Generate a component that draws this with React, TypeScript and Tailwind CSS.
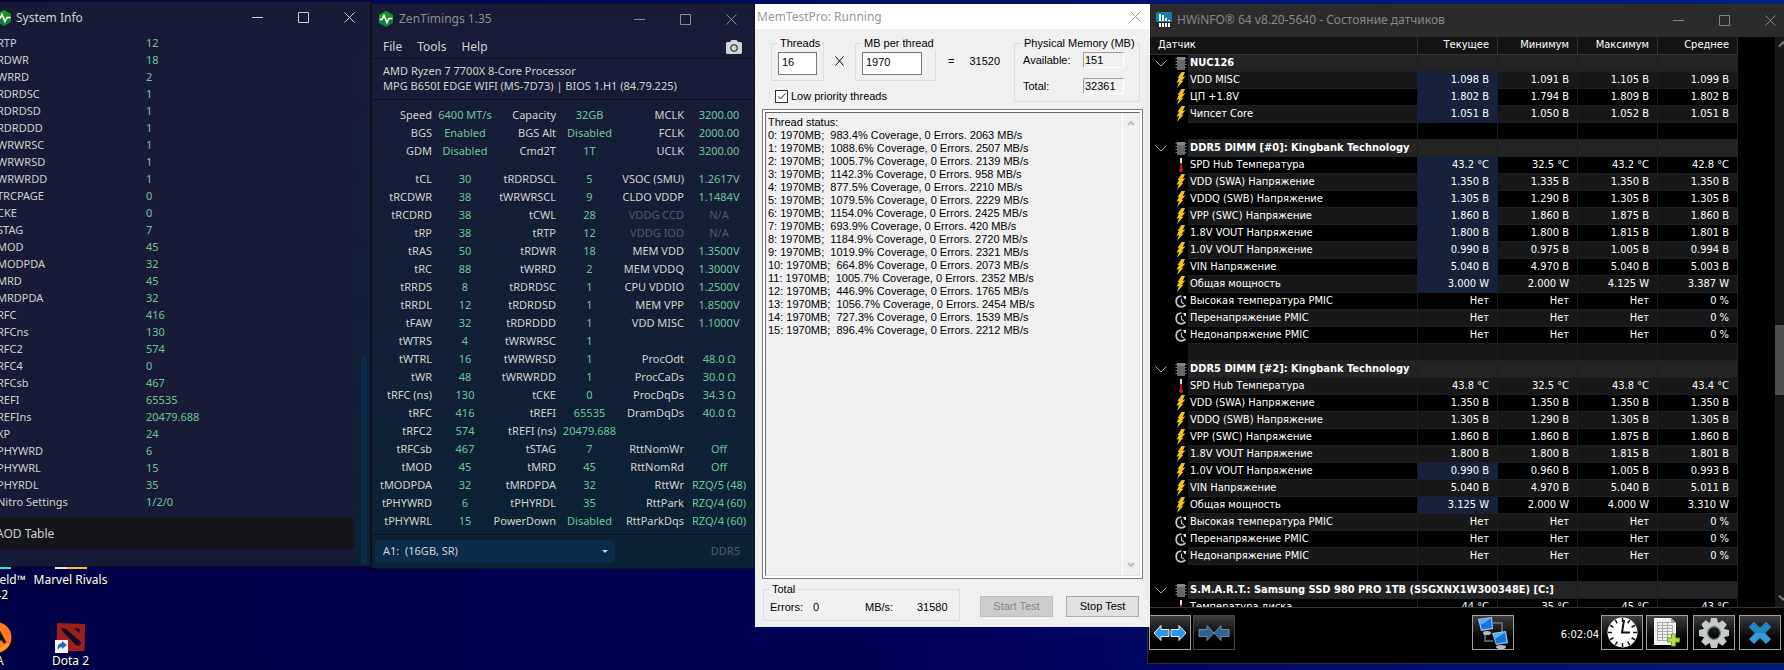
import type { ReactNode } from 'react'
import { FaCamera } from 'react-icons/fa'

type Cell = [string, string]

const sysInfo: Cell[] = [
  ['RTP', '12'],
  ['RDWR', '18'],
  ['WRRD', '2'],
  ['RDRDSC', '1'],
  ['RDRDSD', '1'],
  ['RDRDDD', '1'],
  ['WRWRSC', '1'],
  ['WRWRSD', '1'],
  ['WRWRDD', '1'],
  ['TRCPAGE', '0'],
  ['CKE', '0'],
  ['STAG', '7'],
  ['MOD', '45'],
  ['MODPDA', '32'],
  ['MRD', '45'],
  ['MRDPDA', '32'],
  ['RFC', '416'],
  ['RFCns', '130'],
  ['RFC2', '574'],
  ['RFC4', '0'],
  ['RFCsb', '467'],
  ['REFI', '65535'],
  ['REFIns', '20479.688'],
  ['XP', '24'],
  ['PHYWRD', '6'],
  ['PHYWRL', '15'],
  ['PHYRDL', '35'],
  ['Nitro Settings', '1/2/0'],
]

const general: Cell[][] = [
  [['Speed', '6400 MT/s'], ['Capacity', '32GB'], ['MCLK', '3200.00']],
  [['BGS', 'Enabled'], ['BGS Alt', 'Disabled'], ['FCLK', '2000.00']],
  [['GDM', 'Disabled'], ['Cmd2T', '1T'], ['UCLK', '3200.00']],
]

const timings: Cell[][] = [
  [['tCL', '30'], ['tRDRDSCL', '5'], ['VSOC (SMU)', '1.2617V']],
  [['tRCDWR', '38'], ['tWRWRSCL', '9'], ['CLDO VDDP', '1.1484V']],
  [['tRCDRD', '38'], ['tCWL', '28'], ['VDDG CCD', 'N/A']],
  [['tRP', '38'], ['tRTP', '12'], ['VDDG IOD', 'N/A']],
  [['tRAS', '50'], ['tRDWR', '18'], ['MEM VDD', '1.3500V']],
  [['tRC', '88'], ['tWRRD', '2'], ['MEM VDDQ', '1.3000V']],
  [['tRRDS', '8'], ['tRDRDSC', '1'], ['CPU VDDIO', '1.2500V']],
  [['tRRDL', '12'], ['tRDRDSD', '1'], ['MEM VPP', '1.8500V']],
  [['tFAW', '32'], ['tRDRDDD', '1'], ['VDD MISC', '1.1000V']],
  [['tWTRS', '4'], ['tWRWRSC', '1'], ['', '']],
  [['tWTRL', '16'], ['tWRWRSD', '1'], ['ProcOdt', '48.0 Ω']],
  [['tWR', '48'], ['tWRWRDD', '1'], ['ProcCaDs', '30.0 Ω']],
  [['tRFC (ns)', '130'], ['tCKE', '0'], ['ProcDqDs', '34.3 Ω']],
  [['tRFC', '416'], ['tREFI', '65535'], ['DramDqDs', '40.0 Ω']],
  [['tRFC2', '574'], ['tREFI (ns)', '20479.688'], ['', '']],
  [['tRFCsb', '467'], ['tSTAG', '7'], ['RttNomWr', 'Off']],
  [['tMOD', '45'], ['tMRD', '45'], ['RttNomRd', 'Off']],
  [['tMODPDA', '32'], ['tMRDPDA', '32'], ['RttWr', 'RZQ/5 (48)']],
  [['tPHYWRD', '6'], ['tPHYRDL', '35'], ['RttPark', 'RZQ/4 (60)']],
  [['tPHYWRL', '15'], ['PowerDown', 'Disabled'], ['RttParkDqs', 'RZQ/4 (60)']],
]

const threads: [string, number][] = [
  ['983.4', 2063],
  ['1088.6', 2507],
  ['1005.7', 2139],
  ['1142.3', 958],
  ['877.5', 2210],
  ['1079.5', 2229],
  ['1154.0', 2425],
  ['693.9', 420],
  ['1184.9', 2720],
  ['1019.9', 2321],
  ['664.8', 2073],
  ['1005.7', 2352],
  ['446.9', 1765],
  ['1056.7', 2454],
  ['727.3', 1539],
  ['896.4', 2212],
]

type Kind = 'group' | 'volt' | 'temp' | 'clock' | 'blank'

type Sensor = {
  kind: Kind
  name: string
  values: string[]
  hot?: boolean
}

const none = ['', '', '', '']
const no = ['Нет', 'Нет', 'Нет', '0 %']

const group = (name: string): Sensor => ({ kind: 'group', name, values: none })
const blank: Sensor = { kind: 'blank', name: '', values: none }
const volt = (name: string, values: string, hot = false): Sensor => ({
  kind: 'volt',
  name,
  values: values.split('|'),
  hot,
})
const temp = (name: string, values: string, hot = false): Sensor => ({ ...volt(name, values, hot), kind: 'temp' })
const pmic: Sensor[] = ['Высокая температура PMIC', 'Перенапряжение PMIC', 'Недонапряжение PMIC'].map((name) => ({
  kind: 'clock',
  name,
  values: no,
}))

const sensors: Sensor[] = [
  group('NUC126'),
  volt('VDD MISC', '1.098 В|1.091 В|1.105 В|1.099 В', true),
  volt('ЦП +1.8V', '1.802 В|1.794 В|1.809 В|1.802 В', true),
  volt('Чипсет Core', '1.051 В|1.050 В|1.052 В|1.051 В', true),
  blank,
  group('DDR5 DIMM [#0]: Kingbank Technology'),
  temp('SPD Hub Температура', '43.2 °C|32.5 °C|43.2 °C|42.8 °C', true),
  volt('VDD (SWA) Напряжение', '1.350 В|1.335 В|1.350 В|1.350 В', true),
  volt('VDDQ (SWB) Напряжение', '1.305 В|1.290 В|1.305 В|1.305 В', true),
  volt('VPP (SWC) Напряжение', '1.860 В|1.860 В|1.875 В|1.860 В', true),
  volt('1.8V VOUT Напряжение', '1.800 В|1.800 В|1.815 В|1.801 В', true),
  volt('1.0V VOUT Напряжение', '0.990 В|0.975 В|1.005 В|0.994 В', true),
  volt('VIN Напряжение', '5.040 В|4.970 В|5.040 В|5.003 В', true),
  volt('Общая мощность', '3.000 W|2.000 W|4.125 W|3.387 W', true),
  ...pmic,
  blank,
  group('DDR5 DIMM [#2]: Kingbank Technology'),
  temp('SPD Hub Температура', '43.8 °C|32.5 °C|43.8 °C|43.4 °C'),
  volt('VDD (SWA) Напряжение', '1.350 В|1.350 В|1.350 В|1.350 В'),
  volt('VDDQ (SWB) Напряжение', '1.305 В|1.290 В|1.305 В|1.305 В'),
  volt('VPP (SWC) Напряжение', '1.860 В|1.860 В|1.875 В|1.860 В'),
  volt('1.8V VOUT Напряжение', '1.800 В|1.800 В|1.815 В|1.801 В'),
  volt('1.0V VOUT Напряжение', '0.990 В|0.960 В|1.005 В|0.993 В', true),
  volt('VIN Напряжение', '5.040 В|4.970 В|5.040 В|5.011 В'),
  volt('Общая мощность', '3.125 W|2.000 W|4.000 W|3.310 W', true),
  ...pmic,
  blank,
  group('S.M.A.R.T.: Samsung SSD 980 PRO 1TB (S5GXNX1W300348E) [C:]'),
  temp('Температура диска', '44 °C|35 °C|45 °C|43 °C'),
]

function CaptionButtons({ className = '' }: { className?: string }) {
  const button = 'flex w-[46px] items-center justify-center self-stretch'
  return (
    <div className={`flex self-stretch ${className}`}>
      <button type="button" aria-label="Minimize" className={button}>
        <svg width="11" height="11" stroke="currentColor">
          <path d="M0 5.5h11" />
        </svg>
      </button>
      <button type="button" aria-label="Maximize" className={button}>
        <svg width="11" height="11" stroke="currentColor" fill="none">
          <path d="M.5 .5h10v10h-10z" />
        </svg>
      </button>
      <CloseButton className={button} />
    </div>
  )
}

function CloseButton({ className }: { className: string }) {
  return (
    <button type="button" aria-label="Close" className={className}>
      <svg width="11" height="11" stroke="currentColor">
        <path d="M.5 .5l10 10M10.5 .5l-10 10" />
      </svg>
    </button>
  )
}

function ZenLogo() {
  return (
    <svg width="16" height="16" viewBox="0 0 16 16" className="shrink-0">
      <path d="M8 0l7 4v8l-7 4-7-4V4z" fill="#12803a" />
      <path d="M8 0l7 4v4H1V4z" fill="#1f9124" />
      <path d="M1.500 8.500h2.500l2-4 3 7 2-4h3.500" fill="none" stroke="#fff" strokeWidth="1.600" />
    </svg>
  )
}

function SystemInfo() {
  return (
    <section className="-ml-[5px] mt-px border border-[#0e0f1c] bg-[#181b38] text-[#cfd0d0]">
      <header className="flex h-[31px] items-center">
        <ZenLogo />
        <h1 className="ml-1 flex-1 text-xs">System Info</h1>
        <CaptionButtons className="-mr-[2px]" />
      </header>
      <div className="flex pt-px">
        <div className="flex-1">
          <table className="w-full table-fixed text-[11px] leading-[17px]">
            <tbody>
              {sysInfo.map(([name, value]) => (
                <tr key={name}>
                  <th scope="row" className="w-[150px] p-0 pl-px text-left font-normal whitespace-nowrap">
                    {name}
                  </th>
                  <td className="p-0 text-[#70c49a]">{value}</td>
                </tr>
              ))}
            </tbody>
          </table>
          <button
            type="button"
            className="mt-[8px] mb-4 block h-8 w-full rounded-r-sm bg-[#141519] text-left text-xs"
          >
            AOD Table
          </button>
        </div>
        <div className="flex w-4 flex-col items-center justify-end bg-linear-to-b from-[#181b38] via-[#101f38] to-[#0a2236] pb-px">
          <div className="ml-1 h-[209px] w-[6px] rounded-full bg-[#0b2c48]" />
        </div>
      </div>
    </section>
  )
}

function TimingRow({ cells }: { cells: Cell[] }) {
  return (
    <tr className="h-[18px]">
      {cells.map(([name, value], i) => (
        <TimingPair key={i} name={name} value={value} />
      ))}
    </tr>
  )
}

function TimingPair({ name, value }: { name: string; value: string }) {
  const off = value === 'N/A'
  return (
    <>
      <th scope="row" className={`p-0 font-normal ${off ? 'text-[#505c68]' : ''}`}>
        <div className="flex justify-end whitespace-nowrap">{name}</div>
      </th>
      <td className={`p-0 ${off ? 'text-[#505c68]' : 'text-[#70c49a]'}`}>
        <div className="flex justify-center whitespace-nowrap">{value}</div>
      </td>
    </>
  )
}

function ZenTimings() {
  return (
    <section className="mt-[3px] border border-[#0e0f1c] bg-linear-to-b from-[#181b38] to-[#0a2236] text-[11px] text-[#d2d3d2]">
      <header className="flex h-[30px] items-center pl-[6px] text-[#8b8c94]">
        <ZenLogo />
        <h1 className="ml-[5px] flex-1 text-xs">ZenTimings 1.35</h1>
        <CaptionButtons />
      </header>
      <nav className="flex h-[25px] items-center gap-[15px] border-b border-[#0e0f1c] pt-px pr-3 pl-[11px] text-xs">
        <button type="button">File</button>
        <button type="button">Tools</button>
        <button type="button">Help</button>
        <button type="button" aria-label="Screenshot" className="ml-auto">
          <FaCamera size={16} />
        </button>
      </nav>
      <div className="border-b border-[#0e0f1c] pt-1 pb-[6px] pl-[11px] leading-[15px] whitespace-nowrap">
        <p>AMD Ryzen 7 7700X 8-Core Processor</p>
        <p>MPG B650I EDGE WIFI (MS-7D73) | BIOS 1.H1 (84.79.225)</p>
      </div>
      <table className="mt-[6px] mb-1 w-full table-fixed leading-[18px]">
        <colgroup>
          <col className="w-[60px]" />
          <col className="w-[66px]" />
          <col className="w-[58px]" />
          <col className="w-[67px]" />
          <col className="w-[61px]" />
          <col className="w-[70px]" />
        </colgroup>
        <tbody>
          {general.map((cells) => (
            <TimingRow key={cells[0][0]} cells={cells} />
          ))}
          <tr className="h-[10px]" />
          {timings.map((cells) => (
            <TimingRow key={cells[0][0]} cells={cells} />
          ))}
        </tbody>
      </table>
      <footer className="flex items-center justify-between border-t border-[#0e0f1c] py-[5px] pr-[14px] pl-[3px]">
        <div className="relative w-[240px]">
          <select
            aria-label="Memory module"
            className="h-[23px] w-full appearance-none rounded-sm bg-[#0b2c48] pl-2 whitespace-pre"
          >
            <option>{'A1:\u00a0 (16GB, SR)'}</option>
          </select>
          <svg width="6" height="3" className="absolute top-[10px] right-[7px]" fill="#d2d3d2">
            <path d="M0 0h6l-3 3z" />
          </svg>
        </div>
        <span className="text-[#505c68]">DDR5</span>
      </footer>
    </section>
  )
}

function GroupBox({ title, className, children }: { title: string; className: string; children: ReactNode }) {
  return (
    <fieldset className={`min-w-0 border border-[#dcdcdc] ${className}`}>
      <legend className="px-[2px] leading-[13px] whitespace-nowrap">{title}</legend>
      {children}
    </fieldset>
  )
}

function MemTest() {
  const sunken = 'w-[41px] border border-t-[#a0a0a0] border-r-white border-b-white border-l-[#a0a0a0] pl-px leading-[14px]'
  const field = 'h-[23px] border border-[#7a7a7a] bg-white px-[3px] pb-[3px]'
  return (
    <section className="relative z-10 mt-1 bg-[#f0f0f0] font-['Liberation_Sans',sans-serif] text-[11px] text-black">
      <header className="flex h-[25px] items-center bg-white pl-[2px] font-['Noto_Sans',sans-serif] text-[#999]">
        <h1 className="flex-1 text-xs">MemTestPro: Running</h1>
        <CloseButton className="flex w-[30px] items-center justify-center" />
      </header>
      <div className="flex items-start justify-between pt-[8px] pr-[10px] pl-4">
        <div>
          <div className="flex items-center">
            <GroupBox title="Threads" className="w-[53px] px-[6px] pt-[2px] pb-[5px]">
              <input aria-label="Threads" defaultValue="16" className={`w-full ${field}`} />
            </GroupBox>
            <span className="w-[31px] pt-[3px] text-center">
              <svg width="9" height="10" className="inline" stroke="#000">
                <path d="M.5 .5l8 9M8.500 .5l-8 9" />
              </svg>
            </span>
            <GroupBox title="MB per thread" className="w-[81px] px-[6px] pt-[2px] pb-[5px]">
              <input aria-label="MB per thread" defaultValue="1970" className={`w-[60px] ${field}`} />
            </GroupBox>
            <span className="ml-3 pt-1">=</span>
            <output className="ml-[15px] pt-1">31520</output>
          </div>
          <label className="mt-[7px] ml-1 flex items-center gap-[3px]">
            <span className="relative flex">
              <input
                type="checkbox"
                defaultChecked
                className="size-[13px] appearance-none border border-[#333] bg-white"
              />
              <svg width="13" height="13" className="absolute inset-0" fill="none" stroke="#222">
                <path d="M3 6.500l2.500 2.500 5-5.500" />
              </svg>
            </span>
            Low priority threads
          </label>
        </div>
        <GroupBox title="Physical Memory (MB)" className="w-[126px] pr-[15px] pb-[7px] pl-[7px]">
          <div className="flex items-start justify-between pt-[2px] pl-px">
            <span>Available:</span>
            <output className={sunken}>151</output>
          </div>
          <div className="flex items-start justify-between pt-[9px] pl-px">
            <span>Total:</span>
            <output className={sunken}>32361</output>
          </div>
        </GroupBox>
      </div>
      <div className="mx-[7px] mt-1 border border-[#7a7a7a] bg-white p-[2px]">
        <div className="flex h-[464px] justify-between border border-t-[#696969] border-r-[#e3e3e3] border-b-[#e3e3e3] border-l-[#696969] bg-[#f0f0f0] pl-[2px]">
          <div className="pt-[3px] leading-[13px] whitespace-pre">
            <p>Thread status:</p>
            {threads.map(([coverage, speed], i) => (
              <p key={i}>{`${i}: 1970MB;  ${coverage}% Coverage, 0 Errors. ${speed} MB/s`}</p>
            ))}
          </div>
          <div className="flex w-[17px] flex-col items-center justify-between border-l border-white py-[7px]">
            <svg width="8" height="6" fill="none" stroke="#bfbfbf" strokeWidth="2">
              <path d="M1 5l3-3 3 3" />
            </svg>
            <svg width="8" height="6" fill="none" stroke="#bfbfbf" strokeWidth="2">
              <path d="M1 1l3 3 3-3" />
            </svg>
          </div>
        </div>
      </div>
      <div className="flex items-end pt-1 pr-[11px] pb-[6px] pl-2">
        <GroupBox title="Total" className="h-[38px] w-[197px] px-[6px]">
          <div className="flex pt-[3px]">
            <span className="w-[43px]">Errors:</span>
            <output className="w-[52px]">0</output>
            <span className="w-[52px]">MB/s:</span>
            <output>31580</output>
          </div>
        </GroupBox>
        <button
          type="button"
          disabled
          className="mb-1 ml-auto h-[21px] w-[73px] border border-[#bfbfbf] bg-[#ccc] text-[#838383]"
        >
          Start Test
        </button>
        <button type="button" className="mb-1 ml-[13px] h-[21px] w-[73px] border border-[#adadad] bg-[#e1e1e1]">
          Stop Test
        </button>
      </div>
    </section>
  )
}

function SensorIcon({ kind }: { kind: Kind }) {
  if (kind === 'group')
    return (
      <svg width="12" height="15" viewBox="0 0 12 15">
        <path d="M.5 2.500h11M.5 5.500h11M.5 8.500h11M.5 11.500h11" stroke="#777" strokeDasharray="2 7" />
        <path d="M2 1h8v13H2z" fill="#68686a" />
        <path d="M2 1h8v3H2z" fill="#858588" />
      </svg>
    )
  if (kind === 'volt')
    return (
      <svg width="10" height="16" viewBox="0 0 10 16">
        <path d="M5.500 0h3.500L6.800 5l2.700-.8L5.500 9l2.200-.4L1 16l2-6-2.500.8L3 6H1.500z" fill="#f5c11c" />
      </svg>
    )
  if (kind === 'temp')
    return (
      <svg width="6" height="15" viewBox="0 0 6 15">
        <path d="M2 0h2v6H2z" fill="#ddd" />
        <path d="M2 5h2v6H2z" fill="#c41414" />
        <circle cx="3" cy="12" r="2" fill="#d31818" />
      </svg>
    )
  if (kind === 'clock')
    return (
      <svg width="12" height="13" viewBox="0 0 12 13" fill="none" stroke="#c4c4c4">
        <path d="M6.500 1.200C3 1.200 1.200 3.500 1.200 6.500s2 5.300 4.800 5.300c2 0 3.500-.8 4.500-2" strokeWidth="1.800" />
        <path d="M6.500 3.500v4l2.500 1.500" strokeWidth="1.200" />
        <path d="M8 1h3v3H9.500z" fill="#e8e8e8" stroke="none" />
      </svg>
    )
  return null
}

function SensorRow({ sensor, index }: { sensor: Sensor; index: number }) {
  const { kind, name, values, hot } = sensor
  const isGroup = kind === 'group'
  const bg = isGroup ? 'bg-[#242424]' : index % 2 ? 'bg-[#181818]' : 'bg-black'
  return (
    <tr className={`h-[17px] ${bg}`}>
      <td className="bg-black p-0">
        <div className="flex h-[17px] items-center">
          <span className="flex w-[25px] justify-center">
            {isGroup && (
              <svg width="12" height="7" fill="none" stroke="#aaa">
                <path d="M.5 .5l5.500 5.500 5.500-5.500" />
              </svg>
            )}
          </span>
          <span className="flex w-[15px] justify-center">
            <SensorIcon kind={kind} />
          </span>
        </div>
      </td>
      <th
        scope="row"
        className={`border-r border-b border-[#1a1f2a] p-0 pl-[2px] text-left whitespace-nowrap ${isGroup ? 'font-bold' : 'font-normal'}`}
      >
        {name}
      </th>
      {values.map((value, i) => (
        <td
          key={i}
          className={`border-r border-b border-[#1a1f2a] p-0 pr-2 text-right ${hot && i === 0 ? 'bg-[#16213c]' : ''}`}
        >
          {value}
        </td>
      ))}
    </tr>
  )
}

function ToolButton({
  label,
  className = 'border-[#a0a0a0]',
  children,
}: {
  label: string
  className?: string
  children: ReactNode
}) {
  return (
    <button
      type="button"
      aria-label={label}
      className={`flex h-[35px] w-[42px] shrink-0 items-center justify-center border bg-linear-to-b from-[#3e3e3e] to-black ${className}`}
    >
      {children}
    </button>
  )
}

function Arrows({ inward = false }: { inward?: boolean }) {
  const left = 'M1 9L8 1.500v4h8v7H8v4z'
  const right = 'M33 9L26 1.500v4h-8v7h8v4z'
  return (
    <svg
      width="34"
      height="18"
      viewBox="0 0 34 18"
      fill={inward ? '#2a6494' : '#2f97ea'}
      stroke={inward ? '#7c8a94' : '#e6f2fc'}
    >
      <path d={inward ? 'M17 9L10 1.500v4H2v7h8v4z' : left} />
      <path d={inward ? 'M17 9L24 1.500v4h8v7h-8v4z' : right} />
    </svg>
  )
}

function ClockIcon() {
  const ticks = [0, 30, 60, 90, 120, 150, 180, 210, 240, 270, 300, 330]
  return (
    <svg width="31" height="31" viewBox="0 0 31 31">
      <circle cx="15.500" cy="15.500" r="15" fill="#fff" />
      {ticks.map((angle) => (
        <path key={angle} d="M15.500 1v4" stroke="#111" strokeWidth="1.500" transform={`rotate(${angle} 15.500 15.500)`} />
      ))}
      <path d="M17 3l-2 12.500h8" fill="none" stroke="#111" strokeWidth="2" />
    </svg>
  )
}

function GearIcon() {
  const teeth = [0, 45, 90, 135, 180, 225, 270, 315]
  return (
    <svg width="32" height="32" viewBox="0 0 32 32" fill="#c6cacb">
      {teeth.map((angle) => (
        <path key={angle} d="M13 1h6l1.500 7h-9z" transform={`rotate(${angle} 16 16)`} />
      ))}
      <circle cx="16" cy="16" r="8.500" fill="none" stroke="#c6cacb" strokeWidth="5" />
      <circle cx="16" cy="16" r="6.500" fill="none" stroke="#6d7173" strokeWidth="1" />
    </svg>
  )
}

function SheetIcon() {
  return (
    <svg width="28" height="31" viewBox="0 0 28 31">
      <path d="M1 1h17l5 5v22H1z" fill="#f1f1f1" />
      <path d="M18 1v5h5z" fill="#aaa" />
      <path
        d="M4 5.500h13M4 8.500h16M4 11.500h16M4 14.500h16M4 17.500h16M4 20.500h12M4 23.500h12M4.500 5v19M9.500 5v19M14.500 5v19M19.500 8v10"
        stroke="#aaa"
      />
      <path d="M18.500 17h4v4h4v4h-4v4h-4v-4h-4v-4h4z" fill="#b5dd4c" stroke="#6f9c1c" />
    </svg>
  )
}

function NetworkIcon() {
  return (
    <svg width="32" height="33" viewBox="0 0 32 33">
      <path d="M16 7h9v9M8 18v7h8" fill="none" stroke="#777" strokeWidth="1.500" />
      <path d="M1 3l14-2 1 12-12 2z" fill="#9fc6ee" />
      <path d="M2.500 4L14 2.500l.800 9.500-10 1.500z" fill="#1273d8" />
      <path d="M2.500 4L14 2.500 4 9z" fill="#5cb0f6" />
      <ellipse cx="10" cy="17" rx="4" ry="2" fill="#bbb" />
      <path d="M15 17l14-2 2 12-12 2z" fill="#9fc6ee" />
      <path d="M16.500 18L28 16.500l1.300 9.500-10 1.500z" fill="#1273d8" />
      <path d="M16.500 18L28 16.500 18 23z" fill="#5cb0f6" />
      <ellipse cx="24" cy="31" rx="5" ry="2" fill="#bbb" />
    </svg>
  )
}

function HwInfo() {
  return (
    <section className="mt-1 -ml-[3px] flex flex-col border border-r-0 border-[#2c2c3c] bg-black font-['DejaVu_Sans_Condensed','DejaVu_Sans',sans-serif] text-[11px] text-white">
      <header className="flex h-8 items-center overflow-hidden bg-[#2b2b2b] pb-[2px] pl-2 font-['Noto_Sans',sans-serif] text-[#868686]">
        <svg width="16" height="16" viewBox="0 0 16 16">
          <path d="M1 0h14l1 1v9H0V1z" fill="#177fa5" />
          <path d="M0 10h16v5l-1 1H1l-1-1z" fill="#222" />
          <path d="M4 2v7M7 3v6M10 6v3M13 8v1M4 11v4M7 11v4M10 11v4M13 11v4" stroke="#fff" strokeWidth="2" />
        </svg>
        <h1 className="ml-[5px] flex-1 text-xs whitespace-nowrap">HWiNFO® 64 v8.20-5640 - Состояние датчиков</h1>
        <CaptionButtons className="-mr-[9px]" />
      </header>
      <div className="flex h-[570px] overflow-hidden">
        <div className="flex-1 pr-[37px]">
          <table className="w-full table-fixed leading-[16px]">
            <colgroup>
              <col className="w-[40px]" />
              <col />
              <col className="w-[80px]" />
              <col className="w-[80px]" />
              <col className="w-[80px]" />
              <col className="w-[80px]" />
            </colgroup>
            <thead>
              <tr className="h-[17px] bg-[#141414]">
                <th scope="col" colSpan={2} className="border-r border-b border-[#333] p-0 pl-[10px] text-left font-normal">
                  Датчик
                </th>
                {['Текущее', 'Минимум', 'Максимум', 'Среднее'].map((name) => (
                  <th key={name} scope="col" className="border-r border-b border-[#333] p-0 pr-2 text-right font-normal">
                    {name}
                  </th>
                ))}
              </tr>
            </thead>
            <tbody>
              {sensors.map((sensor, i) => (
                <SensorRow key={i} sensor={sensor} index={i} />
              ))}
            </tbody>
          </table>
        </div>
        <div className="flex w-[9px] flex-col bg-[#171717] pt-1 pb-[6px]">
          <svg width="9" height="6" fill="none" stroke="#777" strokeWidth="2">
            <path d="M4 5.500l4-4 4 4" />
          </svg>
          <div className="mt-[278px] h-[70px] bg-[#4d4d4d]" />
          <svg width="9" height="6" className="mt-auto" fill="none" stroke="#777" strokeWidth="2">
            <path d="M4 .5l4 4 4-4" />
          </svg>
        </div>
      </div>
      <footer className="flex h-14 items-start border-t border-[#333] pt-[7px] pr-[3px] pl-px">
        <ToolButton label="Expand columns">
          <Arrows />
        </ToolButton>
        <ToolButton label="Shrink columns" className="ml-[2px] border-[#444]">
          <Arrows inward />
        </ToolButton>
        <ToolButton label="Network" className="ml-auto border-[#a0a0a0]">
          <NetworkIcon />
        </ToolButton>
        <time className="w-[87px] self-center pr-[2px] pb-[7px] text-right">6:02:04</time>
        <ToolButton label="Reset clock">
          <ClockIcon />
        </ToolButton>
        <ToolButton label="Start logging" className="ml-[3px] border-[#a0a0a0]">
          <SheetIcon />
        </ToolButton>
        <ToolButton label="Settings" className="ml-[5px] border-[#a0a0a0]">
          <GearIcon />
        </ToolButton>
        <ToolButton label="Close sensors" className="ml-[4px] border-[#a0a0a0]">
          <svg width="24" height="24" viewBox="0 0 24 24">
            <path d="M6 1l6 6 6-6 5 5-6 6 6 6-5 5-6-6-6 6-5-5 6-6-6-6z" fill="#349bd6" />
            <path d="M6 1l6 6 6-6 5 5-6 6H7L1 6z" fill="#2484bd" />
          </svg>
        </ToolButton>
      </footer>
    </section>
  )
}

function DesktopIcons() {
  return (
    <div className="grid grid-cols-[26px_89px] text-center text-xs leading-[15px] text-white [text-shadow:1px_1px_2px_#000]">
      <div className="flex h-[55px] flex-col">
        <div className="h-[2px] w-[11px] bg-[#22e6dc]" />
        <p className="mt-[3px] self-end whitespace-nowrap">ield™</p>
        <p className="self-end pr-[18px]">42</p>
      </div>
      <div className="flex h-[55px] flex-col items-center">
        <div className="flex h-[2px] w-8">
          <div className="w-3 bg-[#e8e4e8]" />
          <div className="flex-1 bg-[#f4c430]" />
        </div>
        <p className="mt-[3px] whitespace-nowrap">Marvel Rivals</p>
      </div>
      <div>
        <svg width="12" height="31" viewBox="0 0 12 31">
          <circle cx="-4" cy="15.500" r="15.500" fill="#ff7a1a" />
          <path d="M-19 18a15.500 15.500 0 0 0 29 2C6 24 0 27-8 27z" fill="#ffb31a" />
          <path d="M-6 20L-1 10l6 11M-3 17h6" fill="none" stroke="#111" strokeWidth="3" />
        </svg>
        <p className="-ml-1 text-left">A</p>
      </div>
      <div className="flex flex-col items-center">
        <svg width="32" height="31" viewBox="0 0 32 31">
          <path d="M2 1l28 1-.5 27L1.500 29z" fill="#9e1f1c" />
          <path d="M6 6l5 1 15 13-1 4-4-1L8 10zM19 6l6 1-1 4zM7 19l5 4-5 2z" fill="#0b0826" />
          <path d="M0 18h13v13H0z" fill="#f2f2f2" />
          <path d="M3 28c-1-4 1-7 4-7v-2l5 4-5 4v-2c-2 0-3 1-4 3z" fill="#2c67b0" />
        </svg>
        <p>Dota 2</p>
      </div>
    </div>
  )
}

export default function App() {
  return (
    <main className="h-screen overflow-hidden bg-linear-to-r from-[#000046] via-[#000058] to-[#001a80] font-['Noto_Sans',sans-serif]">
      <div className="grid grid-cols-[371fr_384fr_395fr_634fr] items-start bg-[linear-gradient(to_right,#000050,#001f80)] bg-[length:100%_4px] bg-no-repeat *:min-w-0">
        <div>
          <SystemInfo />
          <DesktopIcons />
        </div>
        <ZenTimings />
        <MemTest />
        <HwInfo />
      </div>
    </main>
  )
}
